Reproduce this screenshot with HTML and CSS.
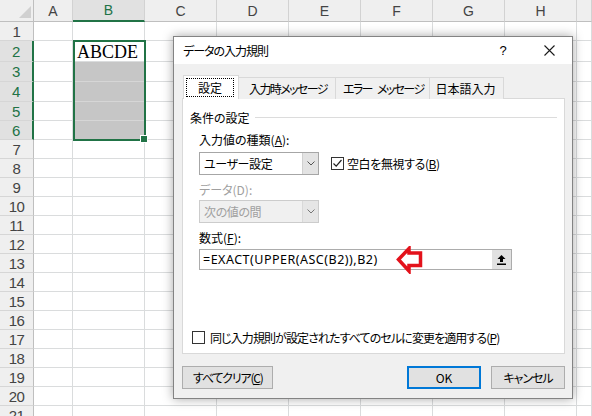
FILE: index.html
```html
<!DOCTYPE html>
<html lang="ja">
<head>
<meta charset="utf-8">
<title>データの入力規則</title>
<link rel="stylesheet" href="styles.css">
</head>
<body>
<div class="app">
  <div class="sheet">
    <div class="row head">
      <div class="corner"><svg width="12" height="12" viewBox="0 0 12 12"><polygon points="12,0 12,12 0,12" fill="#d0d0d0"/></svg></div>
      <div class="ch">A</div><div class="ch on">B</div><div class="ch">C</div><div class="ch">D</div><div class="ch">E</div><div class="ch">F</div><div class="ch">G</div><div class="ch">H</div><div class="ch"></div>
    </div>
    <div class="row"><div class="rh">1</div><div class="c"></div><div class="c"></div><div class="c"></div><div class="c"></div><div class="c"></div><div class="c"></div><div class="c"></div><div class="c"></div><div class="c"></div></div>
    <div class="row tall"><div class="rh on">2</div><div class="c"></div><div class="c active">ABCDE</div><div class="c"></div><div class="c"></div><div class="c"></div><div class="c"></div><div class="c"></div><div class="c"></div><div class="c"></div></div>
    <div class="row mid"><div class="rh on">3</div><div class="c"></div><div class="c hl"></div><div class="c"></div><div class="c"></div><div class="c"></div><div class="c"></div><div class="c"></div><div class="c"></div><div class="c"></div></div>
    <div class="row mid"><div class="rh on">4</div><div class="c"></div><div class="c hl"></div><div class="c"></div><div class="c"></div><div class="c"></div><div class="c"></div><div class="c"></div><div class="c"></div><div class="c"></div></div>
    <div class="row"><div class="rh on">5</div><div class="c"></div><div class="c hl"></div><div class="c"></div><div class="c"></div><div class="c"></div><div class="c"></div><div class="c"></div><div class="c"></div><div class="c"></div></div>
    <div class="row"><div class="rh on">6</div><div class="c"></div><div class="c hl"></div><div class="c"></div><div class="c"></div><div class="c"></div><div class="c"></div><div class="c"></div><div class="c"></div><div class="c"></div></div>
    <div class="row"><div class="rh">7</div><div class="c"></div><div class="c"></div><div class="c"></div><div class="c"></div><div class="c"></div><div class="c"></div><div class="c"></div><div class="c"></div><div class="c"></div></div>
    <div class="row"><div class="rh">8</div><div class="c"></div><div class="c"></div><div class="c"></div><div class="c"></div><div class="c"></div><div class="c"></div><div class="c"></div><div class="c"></div><div class="c"></div></div>
    <div class="row"><div class="rh">9</div><div class="c"></div><div class="c"></div><div class="c"></div><div class="c"></div><div class="c"></div><div class="c"></div><div class="c"></div><div class="c"></div><div class="c"></div></div>
    <div class="row"><div class="rh">10</div><div class="c"></div><div class="c"></div><div class="c"></div><div class="c"></div><div class="c"></div><div class="c"></div><div class="c"></div><div class="c"></div><div class="c"></div></div>
    <div class="row"><div class="rh">11</div><div class="c"></div><div class="c"></div><div class="c"></div><div class="c"></div><div class="c"></div><div class="c"></div><div class="c"></div><div class="c"></div><div class="c"></div></div>
    <div class="row"><div class="rh">12</div><div class="c"></div><div class="c"></div><div class="c"></div><div class="c"></div><div class="c"></div><div class="c"></div><div class="c"></div><div class="c"></div><div class="c"></div></div>
    <div class="row"><div class="rh">13</div><div class="c"></div><div class="c"></div><div class="c"></div><div class="c"></div><div class="c"></div><div class="c"></div><div class="c"></div><div class="c"></div><div class="c"></div></div>
    <div class="row"><div class="rh">14</div><div class="c"></div><div class="c"></div><div class="c"></div><div class="c"></div><div class="c"></div><div class="c"></div><div class="c"></div><div class="c"></div><div class="c"></div></div>
    <div class="row"><div class="rh">15</div><div class="c"></div><div class="c"></div><div class="c"></div><div class="c"></div><div class="c"></div><div class="c"></div><div class="c"></div><div class="c"></div><div class="c"></div></div>
    <div class="row"><div class="rh">16</div><div class="c"></div><div class="c"></div><div class="c"></div><div class="c"></div><div class="c"></div><div class="c"></div><div class="c"></div><div class="c"></div><div class="c"></div></div>
    <div class="row"><div class="rh">17</div><div class="c"></div><div class="c"></div><div class="c"></div><div class="c"></div><div class="c"></div><div class="c"></div><div class="c"></div><div class="c"></div><div class="c"></div></div>
    <div class="row"><div class="rh">18</div><div class="c"></div><div class="c"></div><div class="c"></div><div class="c"></div><div class="c"></div><div class="c"></div><div class="c"></div><div class="c"></div><div class="c"></div></div>
    <div class="row"><div class="rh">19</div><div class="c"></div><div class="c"></div><div class="c"></div><div class="c"></div><div class="c"></div><div class="c"></div><div class="c"></div><div class="c"></div><div class="c"></div></div>
    <div class="row"><div class="rh">20</div><div class="c"></div><div class="c"></div><div class="c"></div><div class="c"></div><div class="c"></div><div class="c"></div><div class="c"></div><div class="c"></div><div class="c"></div></div>
    <div class="row"><div class="rh">21</div><div class="c"></div><div class="c"></div><div class="c"></div><div class="c"></div><div class="c"></div><div class="c"></div><div class="c"></div><div class="c"></div><div class="c"></div></div>
  </div>

  <div class="selbox"></div>
  <div class="handle"></div>

  <div class="dlg">
    <div class="dlg-title">
      <span class="dlg-name">データの入力規則</span>
      <span class="tbtn help">?</span>
      <span class="tbtn"><svg width="11" height="11" viewBox="0 0 11 11"><path d="M0.5 0.5 L10.5 10.5 M10.5 0.5 L0.5 10.5" stroke="#1a1a1a" stroke-width="1.1" fill="none"/></svg></span>
    </div>
    <div class="dlg-body">
      <div class="tabs">
        <div class="tab active"><span class="focus">設定</span></div>
        <div class="tab kana">入力時メッセージ</div>
        <div class="tab kana sp2">エラー メッセージ</div>
        <div class="tab last">日本語入力</div>
      </div>
      <div class="panel">
        <div class="group"><span>条件の設定</span><i class="rule"></i></div>
        <div class="fields">
          <div class="lbl">入力値の種類(<u>A</u>):</div>
          <div class="line">
            <div class="combo"><span class="val">ユーザー設定</span><span class="drop"><svg width="8" height="5" viewBox="0 0 8 5"><path d="M0.5 0.5 L4 4 L7.5 0.5" stroke="#555" stroke-width="1" fill="none"/></svg></span></div>
            <div class="chk"><span class="box"><svg width="11" height="11" viewBox="0 0 11 11"><path d="M1.5 5.5 L4.2 8.2 L9.5 2" stroke="#222" stroke-width="1.2" fill="none"/></svg></span>空白を無視する(<u>B</u>)</div>
          </div>
          <div class="lbl dis">データ(D):</div>
          <div class="combo disabled"><span class="val">次の値の間</span><span class="drop"><svg width="8" height="5" viewBox="0 0 8 5"><path d="M0.5 0.5 L4 4 L7.5 0.5" stroke="#777" stroke-width="1" fill="none"/></svg></span></div>
          <div class="lbl">数式(<u>F</u>):</div>
          <div class="input">
            <span class="val">=EXACT(UPPER(ASC(B2)),B2)</span>
            <span class="up"><svg width="9" height="10" viewBox="0 0 9 10"><path d="M4.5 0 L0.5 4 L3 4 L3 7 L6 7 L6 4 L8.5 4 Z" fill="#000"/><rect x="0" y="8.5" width="9" height="1.5" fill="#000"/></svg></span>
            <svg class="mark" width="28" height="28" viewBox="0 0 28 28"><polygon points="3.5,13.5 14,2.5 14,7 25.5,7 25.5,19.5 14,19.5 14,25" fill="#fff" stroke="#e3121b" stroke-width="3.5" stroke-linejoin="miter"/></svg>
          </div>
        </div>
        <div class="chk bottom"><span class="box"></span>同じ入力規則が設定されたすべてのセルに変更を適用する(<u>P</u>)</div>
      </div>
      <div class="btns">
        <div class="btn clear">すべてクリア(<u>C</u>)</div>
        <span class="sp"></span>
        <div class="btn default">OK</div>
        <div class="btn cancel">キャンセル</div>
      </div>
    </div>
  </div>
</div>
</body>
</html>
```

FILE: styles.css
```css
* { box-sizing: border-box; margin: 0; padding: 0; }
html, body { width: 592px; height: 416px; overflow: hidden; background: #fff; }
body { font-family: "Liberation Sans", Arial, sans-serif; }
.app { position: relative; width: 592px; height: 416px; overflow: hidden; }

/* sheet */
.row { display: grid; grid-template-columns: 34px 39px repeat(7, 72px) 1fr; height: 19px; }
.row.tall { height: 21px; }
.row.mid { height: 20px; }
.row.head { height: 22px; }
.c { border-right: 1px solid #dadcdd; border-bottom: 1px solid #dadcdd; }
.c.hl { background: #c6c6c6; border-bottom-color: #d6d6d6; border-right-color: #d6d6d6; }
.c.active { font-family: "Liberation Serif", "Times New Roman", serif; font-size: 18px; line-height: 18px; color: #000; padding: 2px 0 0 4px; }
.corner { background: #efefef; border-right: 1px solid #bfbfbf; border-bottom: 1px solid #bfbfbf; display: flex; align-items: flex-end; justify-content: flex-end; padding: 0 2px 3px 0; }
.ch { background: #efefef; border-right: 1px solid #d2d2d2; border-bottom: 1px solid #bfbfbf; font-size: 14px; color: #444; display: flex; align-items: center; justify-content: center; }
.ch.on { background: #e1e1e1; color: #217346; border-bottom: 2px solid #217346; }
.rh { background: #efefef; border-right: 1px solid #bfbfbf; border-bottom: 1px solid #d6d6d6; font-size: 15px; color: #444; display: flex; align-items: center; justify-content: center; letter-spacing: -0.5px; }
.rh.on { background: #e1e1e1; color: #217346; border-right: 2px solid #217346; }

.selbox { position: absolute; left: 73px; top: 40px; width: 73px; height: 101px; border: 2px solid #217346; }
.handle { position: absolute; left: 140px; top: 135px; width: 8px; height: 8px; background: #217346; border: 1px solid #fff; }

/* dialog */
.dlg { position: absolute; left: 173px; top: 36px; width: 400px; height: 363px; border: 1px solid #838383; background: #f0f0f0; box-shadow: 0 0 10px rgba(0,0,0,0.35); display: flex; flex-direction: column; font-family: "Noto Sans CJK JP", sans-serif; font-feature-settings: "palt"; font-size: 12px; color: #000; }
.dlg-title { height: 27px; background: #fff; display: flex; align-items: center; padding-left: 9px; flex: none; }
.dlg-name { flex: 1; letter-spacing: -1px; }
.tbtn { width: 46px; height: 27px; display: flex; align-items: center; justify-content: center; font-family: "Liberation Sans", sans-serif; font-size: 14px; }
.tbtn.help { font-size: 13px; }
.dlg-body { flex: 1; display: flex; flex-direction: column; padding: 11px 7px 9px 8px; }

.tabs { display: flex; align-items: flex-end; height: 24px; margin-left: 1px; margin-bottom: -1px; position: relative; z-index: 1; }
.tab { height: 22px; padding: 0 8px; border: 1px solid #d9d9d9; border-left: none; border-bottom: none; display: flex; align-items: center; background: #f0f0f0; }
.tab.kana { letter-spacing: -1.6px; padding: 0 8px 0 10px; }
.tab.kana.sp2 { word-spacing: 4px; padding: 0 5px 0 7px; }
.tab.last { padding: 0 7px 0 6px; }
.tab.active { height: 24px; background: #fff; border-left: 1px solid #d9d9d9; padding: 2px 4px 2px 2px; }
.focus { border: 1px dotted #000; padding: 0 11px; height: 19px; display: flex; align-items: center; }

.panel { height: 256px; background: #fff; border: 1px solid #d9d9d9; display: flex; flex-direction: column; padding: 10px 7px 8px 7px; flex: none; }
.group { display: flex; align-items: center; height: 16px; }
.rule { flex: 1; height: 1px; background: #dcdcdc; margin-left: 5px; }
.fields { padding-left: 9px; display: flex; flex-direction: column; align-items: flex-start; }
.lbl { height: 16px; line-height: 16px; margin-top: 7px; }
.lbl.dis { color: #a0a0a0; }
.line { display: flex; align-items: center; margin-top: 4px; }
.combo { width: 120px; height: 23px; border: 1px solid #a6a6a6; background: #fff; display: flex; align-items: center; }
.combo .val { flex: 1; padding-left: 4px; letter-spacing: -0.4px; }
.drop { width: 16px; height: 21px; background: #e3e3e3; border-left: 1px solid #d0d0d0; display: flex; align-items: center; justify-content: center; }
.combo.disabled { margin-top: 2px; background: #f0f0f0; border-color: #cccccc; color: #a0a0a0; }
.combo.disabled .drop { background: #e6e6e6; border-left-color: #d9d9d9; }
.chk { display: flex; align-items: center; margin-left: 12px; letter-spacing: -0.4px; }
.box { width: 13px; height: 13px; border: 1px solid #333; background: #fff; margin-right: 3px; display: flex; align-items: center; justify-content: center; }
.input { position: relative; width: 313px; height: 21px; margin-top: 3px; border: 1px solid #acacac; background: #fff; display: flex; align-items: center; }
.input .val { flex: 1; padding-left: 3px; font-family: "Noto Sans", sans-serif; font-size: 12.5px; letter-spacing: 0.5px; }
.up { width: 19px; height: 19px; background: #e1e1e1; display: flex; align-items: center; justify-content: center; }
.mark { position: absolute; left: 195px; top: -4px; }
.chk.bottom { margin: auto 0 0 2px; height: 16px; letter-spacing: -0.9px; }
.chk.bottom .box { margin-right: 5px; }

.btns { display: flex; align-items: center; margin-top: 12px; }
.sp { flex: 1; }
.btn { height: 23px; min-width: 74px; padding: 0 7px; border: 1px solid #adadad; background: #e1e1e1; display: flex; align-items: center; justify-content: center; }
.btn.clear { letter-spacing: -1.2px; padding: 0 9px 0 10px; }
.btn.cancel { letter-spacing: -1px; }
.btn.default { border: 2px solid #0078d7; margin-right: 10px; }
u { text-decoration: underline; text-underline-offset: 1px; }
```
